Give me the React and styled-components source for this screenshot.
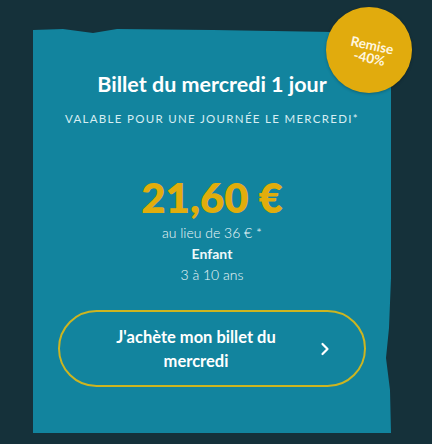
import React from 'react';
import styled, { createGlobalStyle } from 'styled-components';

const GlobalStyle = createGlobalStyle`
  body {
    margin: 0;
    background: #15313a;
    font-family: Lato, "Noto Sans", sans-serif;
  }
`;

const Page = styled.div`
  width: 432px;
  height: 444px;
  padding: 28px 0 0 33px;
  box-sizing: border-box;
`;

const CardWrap = styled.div`
  position: relative;
  width: 358px;
`;

const Card = styled.div`
  height: 405px;
  background: #12849e;
  box-sizing: border-box;
  padding-top: 44px;
  display: flex;
  flex-direction: column;
  align-items: center;
  color: #fff;
  clip-path: polygon(
    0 2px, 30px 1px, 60px 5px, 84px 1px, 180px 2px, 300px 4px, 358px 6px,
    358px 250px, 356px 300px, 353px 330px, 357px 362px, 358px 405px, 0 405px
  );
`;

const Badge = styled.div`
  position: absolute;
  top: -21px;
  right: -21px;
  width: 86px;
  height: 86px;
  border-radius: 50%;
  background: #e1ab0d;
  display: flex;
  align-items: center;
  justify-content: center;
  box-shadow: 0 1px 3px rgba(0, 0, 0, 0.25);
`;

const BadgeText = styled.div`
  transform: translate(2px, 2px) rotate(12deg);
  color: #fff7e0;
  font-weight: 700;
  font-size: 13.5px;
  line-height: 13px;
  text-align: center;
`;

const Title = styled.h2`
  margin: 0;
  font-size: 21.5px;
  line-height: 24px;
  font-weight: 700;
`;

const Subtitle = styled.div`
  margin-top: 16px;
  font-size: 11.5px;
  line-height: 14px;
  letter-spacing: 1.3px;
  text-transform: uppercase;
  color: #d8eef3;
`;

const Price = styled.div`
  margin-top: 46px;
  font-size: 42px;
  line-height: 50px;
  font-weight: 800;
  color: #e1ad0c;
`;

const InfoBlock = styled.div`
  display: flex;
  flex-direction: column;
  align-items: center;
`;

const Info = styled.div`
  font-size: 14px;
  line-height: 21px;
  font-weight: ${p => (p.bold ? 700 : 300)};
  color: #eef8fa;
`;

const Button = styled.button`
  margin-top: 25px;
  width: 308px;
  height: 77px;
  border: 2px solid #cdb520;
  border-radius: 39px;
  background: transparent;
  display: flex;
  align-items: center;
  padding: 0 34px 0 36px;
  box-sizing: border-box;
  color: #fff;
  font-family: inherit;
  cursor: pointer;
`;

const ButtonLabel = styled.span`
  width: 200px;
  font-size: 16.5px;
  line-height: 24px;
  font-weight: 700;
  text-align: center;
`;

const ChevronBox = styled.span`
  margin-left: auto;
  display: flex;
`;

const Chevron = () => (
  <ChevronBox>
    <svg width="10" height="14" viewBox="0 0 10 14" fill="none">
      <path d="M2.5 2 L7.5 7 L2.5 12" stroke="#fff" strokeWidth="2.2" strokeLinecap="round" strokeLinejoin="round" />
    </svg>
  </ChevronBox>
);

export default function App() {
  return (
    <Page>
      <GlobalStyle />
      <CardWrap>
        <Card>
          <Title>Billet du mercredi 1 jour</Title>
          <Subtitle>Valable pour une journée le mercredi*</Subtitle>
          <Price>21,60 €</Price>
          <InfoBlock>
            <Info>au lieu de 36 € *</Info>
            <Info bold>Enfant</Info>
            <Info>3 à 10 ans</Info>
          </InfoBlock>
          <Button>
            <ButtonLabel>J'achète mon billet du mercredi</ButtonLabel>
            <Chevron />
          </Button>
        </Card>
        <Badge>
          <BadgeText>Remise<br />-40%</BadgeText>
        </Badge>
      </CardWrap>
    </Page>
  );
}
